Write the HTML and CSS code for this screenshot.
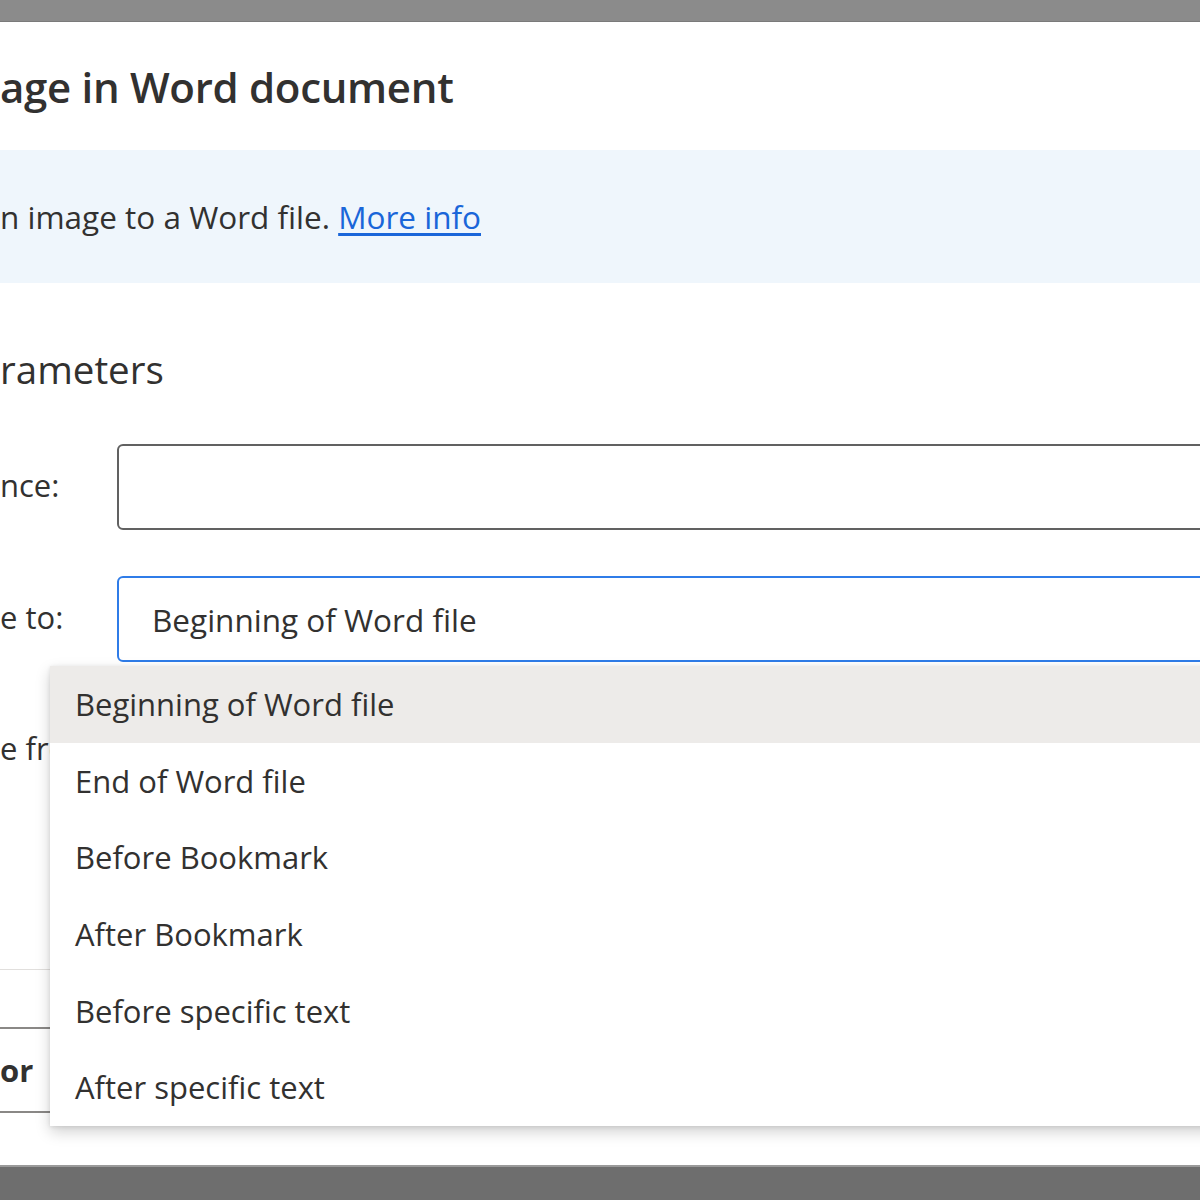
FILE: index.html
```html
<!DOCTYPE html>
<html lang="en">
<head>
    <meta charset="UTF-8">
    <title>Insert image in Word document</title>
    <link rel="stylesheet" href="styles.css">
</head>
<body>
    <div class="page">
        <div class="top-bar"></div>

        <div class="dialog">
            <h1 class="title">age in Word document</h1>

            <div class="info-bar">
                <p>n image to a Word file. <a href="#">More info</a></p>
            </div>

            <h2 class="section-title">rameters</h2>

            <div class="form">
                <div class="form-row">
                    <label class="field-label">nce:</label>
                    <div class="field"><div class="text-input"></div></div>
                </div>

                <div class="form-row">
                    <label class="field-label">e to:</label>
                    <div class="field">
                        <div class="text-input focused">Beginning of Word file</div>

                        <!-- open dropdown list -->
                        <ul class="dropdown">
                            <li class="option selected">Beginning of Word file</li>
                            <li class="option">End of Word file</li>
                            <li class="option">Before Bookmark</li>
                            <li class="option">After Bookmark</li>
                            <li class="option">Before specific text</li>
                            <li class="option">After specific text</li>
                        </ul>
                    </div>
                </div>

                <div class="form-row short">
                    <label class="field-label">e fro</label>
                </div>
            </div>

            <div class="footer">
                <button class="error-button">or</button>
            </div>
        </div>

        <div class="bottom-bar"></div>
    </div>
</body>
</html>
```

FILE: styles.css
```css
body {
    margin: 0;
    background: #ffffff;
    font-family: "Open Sans", "Noto Sans", sans-serif;
    color: #323130;
}
.page {
    height: 1200px;
    display: flex;
    flex-direction: column;
    overflow: hidden;
}
.top-bar {
    height: 21px;
    background: #8b8b8b;
    border-bottom: 1px solid #7a7a7a;
}
.dialog {
    flex: 1;
    display: flex;
    flex-direction: column;
}
.title {
    margin: 0;
    height: 128px;
    display: flex;
    align-items: center;
    font-size: 42px;
    font-weight: 600;
    letter-spacing: -0.3px;
}
.info-bar {
    height: 133px;
    background: #eff6fc;
    display: flex;
    align-items: center;
}
.info-bar p {
    margin: 0;
    font-size: 31.5px;
}
.info-bar a {
    color: #1a66d9;
    text-decoration: underline;
    text-underline-offset: 4px;
}
.section-title {
    margin: 0;
    height: 161px;
    padding-top: 60px;
    box-sizing: border-box;
    font-size: 38.5px;
    font-weight: 400;
}
.form {
    display: flex;
    flex-direction: column;
    gap: 46px;
}
.form-row {
    display: grid;
    grid-template-columns: 117px 1fr;
    align-items: center;
    height: 86px;
}
.form-row.short {
    height: 86px;
    margin-top: -6px;
}
.field-label {
    font-size: 31px;
    padding-bottom: 4px;
    white-space: nowrap;
}
.form-row.short .field-label {
    padding-top: 10px;
}
.field {
    position: relative;
}
.text-input {
    height: 86px;
    box-sizing: border-box;
    margin-right: -20px;
    border: 2px solid #616161;
    border-radius: 6px;
    display: flex;
    align-items: center;
    padding-left: 33px;
    font-size: 31.5px;
}
.text-input.focused {
    border-color: #2f7ce8;
}
.dropdown {
    position: absolute;
    top: calc(100% + 4px);
    left: -67px;
    right: -40px;
    margin: 0;
    padding: 0;
    list-style: none;
    background: #ffffff;
    box-shadow: 0 6px 14px rgba(0, 0, 0, 0.18), 0 1px 4px rgba(0, 0, 0, 0.1);
    z-index: 2;
}
.option {
    height: 76.6px;
    display: flex;
    align-items: center;
    padding-left: 25px;
    font-size: 31px;
}
.option.selected {
    background: #edebe9;
}
.footer {
    margin-top: 181px;
    border-top: 1px solid #e1dfdd;
    padding-top: 57px;
}
.error-button {
    display: block;
    width: 200px;
    height: 86px;
    padding: 0;
    background: #ffffff;
    border: none;
    border-top: 2px solid #8a8886;
    border-bottom: 2px solid #8a8886;
    text-align: left;
    font-family: inherit;
    font-size: 31px;
    font-weight: 700;
    color: #323130;
}
.bottom-bar {
    height: 35px;
    background: #6e6e6e;
    border-top: 2px solid #9a9a9a;
    box-sizing: border-box;
}
```
